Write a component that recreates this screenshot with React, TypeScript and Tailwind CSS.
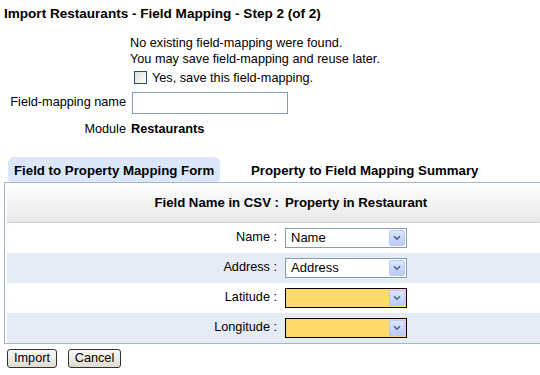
import React from "react";

const font = { fontFamily: '"Liberation Sans", Arial, sans-serif' };

function Arrow() {
  return (
    <div className="absolute right-[1px] top-[1px] bottom-[1px] w-[16px] rounded-[2px] border border-[#bccbef] bg-gradient-to-b from-[#dbe5fd] to-[#b8cbf8] flex items-center justify-center">
      <svg width="8" height="6" viewBox="0 0 8 6">
        <path d="M1 1.2 L4 4.2 L7 1.2" fill="none" stroke="#4d6185" strokeWidth="1.6" />
      </svg>
    </div>
  );
}

function Select({ value, yellow }: { value?: string; yellow?: boolean }) {
  return (
    <div
      className={
        "relative w-[122px] h-[20px] border " +
        (yellow ? "border-black bg-[#ffd96b]" : "border-[#7f9db9] bg-white")
      }
    >
      <div className="pl-[5px] leading-[18px] text-[13px]">{value}</div>
      <Arrow />
    </div>
  );
}

const rows: { label: string; value?: string; yellow?: boolean }[] = [
  { label: "Name :", value: "Name" },
  { label: "Address :", value: "Address" },
  { label: "Latitude :", yellow: true },
  { label: "Longitude :", yellow: true },
];

export default function App() {
  return (
    <div className="w-[540px] h-[375px] overflow-hidden bg-white text-black text-[12.7px]" style={font}>
      <div className="pl-[4px] pt-[6px] h-[22px] leading-[16px] font-bold text-[13.55px]">
        Import Restaurants - Field Mapping - Step 2 (of 2)
      </div>
      <div className="pl-[130px] mt-[13px]">
        <div className="h-[16px] leading-[16px]">No existing field-mapping were found.</div>
        <div className="h-[16px] leading-[16px]">You may save field-mapping and reuse later.</div>
        <div className="h-[17px] mt-[2px] flex items-center">
          <div className="ml-[4px] w-[13px] h-[13px] border border-[#1c5180] bg-gradient-to-br from-[#dcdcd7] to-[#ffffff]" />
          <span className="ml-[5px] leading-[16px]">Yes, save this field-mapping.</span>
        </div>
      </div>
      <div className="flex items-center mt-[6px] h-[22px]">
        <div className="w-[126px] text-right">Field-mapping name</div>
        <div className="ml-[6px] w-[156px] h-[22px] border border-[#7f9db9] bg-white" />
      </div>
      <div className="flex mt-[7px] h-[16px] leading-[16px]">
        <div className="w-[126px] text-right">Module</div>
        <div className="ml-[5px] font-bold">Restaurants</div>
      </div>
      <div className="flex mt-[20px] h-[25px] pl-[8px] text-[13.25px]">
        <div className="h-[25px] rounded-t-[6px] rounded-b-[3px] bg-[#dbe7f9] px-[6px] pt-[6px] leading-[16px] font-bold w-[212px] whitespace-nowrap">
          Field to Property Mapping Form
        </div>
        <div className="ml-[31px] pt-[6px] leading-[16px] font-bold whitespace-nowrap">Property to Field Mapping Summary</div>
      </div>
      <div className="ml-[4px] w-[560px] border-t border-l border-b border-[#a3b8c4] pl-[2px]">
        <div className="h-[40px] border-b border-[#d3d3d3] bg-gradient-to-b from-[#ffffff] to-[#e8e8e8] flex items-center font-bold text-[13.2px]">
          <div className="w-[275px] text-right pr-[3px]">Field Name in CSV :</div>
          <div className="ml-[3px]">Property in Restaurant</div>
        </div>
        {rows.map((r, i) => (
          <div
            key={r.label}
            className={"h-[30px] flex items-center " + (i % 2 === 1 ? "bg-[#e5ecf6]" : "bg-white")}
          >
            <div className="w-[275px] text-right pr-[5px]">{r.label}</div>
            <div className="ml-[3px]">
              <Select value={r.value} yellow={r.yellow} />
            </div>
          </div>
        ))}
      </div>
      <div className="flex mt-[5px] pl-[7px] gap-[11px]">
        <button className="w-[50px] h-[19px] border border-[#333] rounded-[3px] bg-gradient-to-b from-[#fafaf7] to-[#dedbd0] text-[12.7px] leading-[17px]">
          Import
        </button>
        <button className="w-[53px] h-[19px] border border-[#333] rounded-[3px] bg-gradient-to-b from-[#fafaf7] to-[#dedbd0] text-[12.7px] leading-[17px]">
          Cancel
        </button>
      </div>
    </div>
  );
}
